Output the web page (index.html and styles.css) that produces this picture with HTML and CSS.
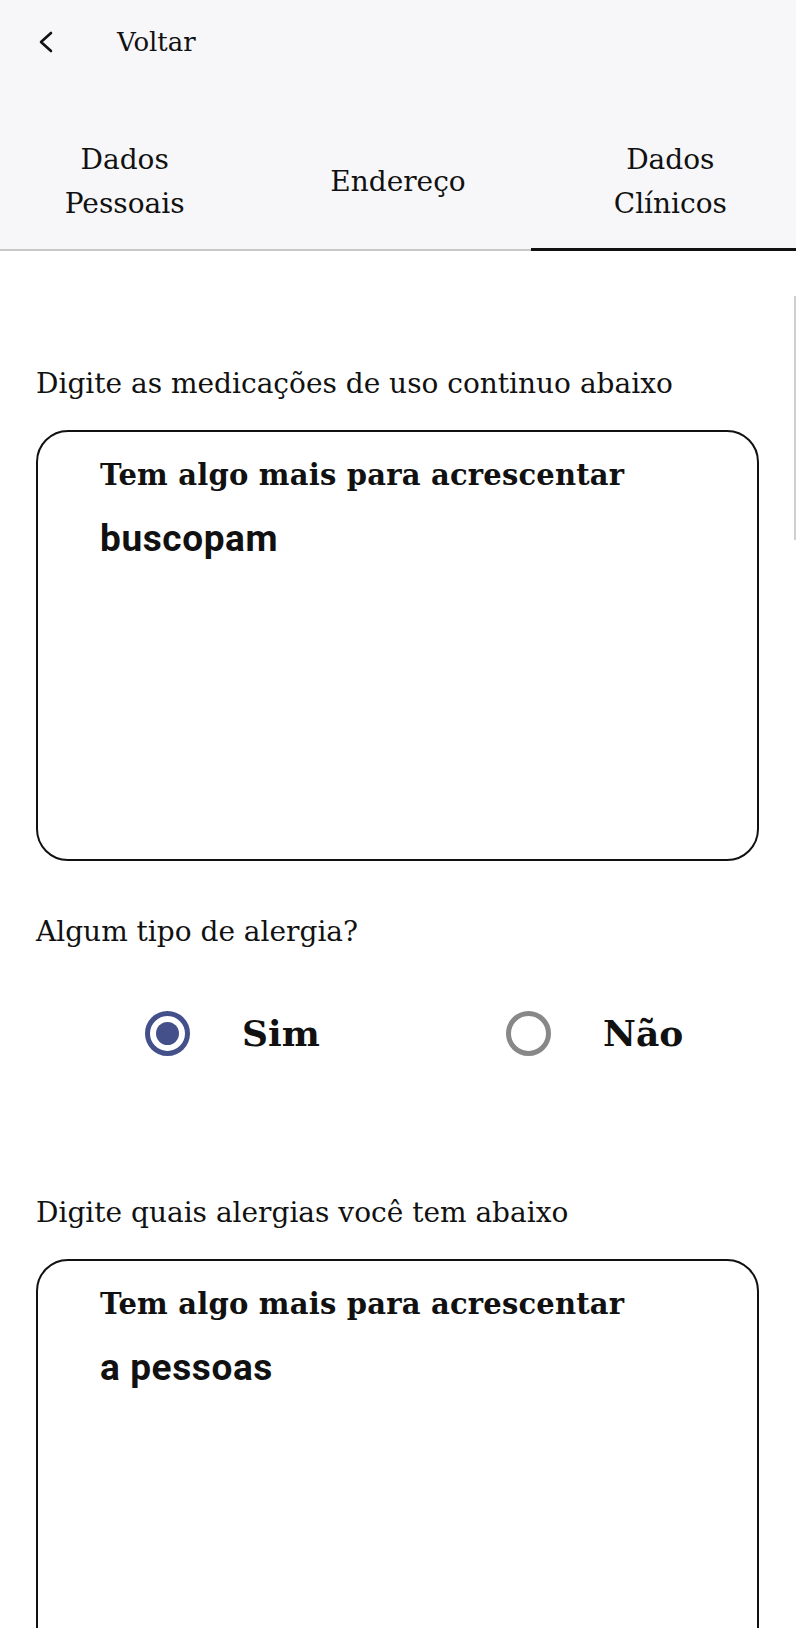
FILE: index.html
```html
<!DOCTYPE html>
<html lang="pt">
<head>
<meta charset="utf-8">
<link rel="stylesheet" href="styles.css">
</head>
<body>
<div class="screen">
  <header class="header">
    <div class="topbar">
      <svg class="back" width="20" height="24" viewBox="0 0 20 24"><path d="M15 3 L5 12 L15 21" fill="none" stroke="#111" stroke-width="2.6" stroke-linecap="round" stroke-linejoin="round"/></svg>
      <span class="back-label">Voltar</span>
    </div>
    <nav class="tabs">
      <div class="tab tab-left">Dados<br>Pessoais</div>
      <div class="tab">Endereço</div>
      <div class="tab tab-right active">Dados<br>Clínicos</div>
    </nav>
  </header>
  <main class="content">
    <p class="label label-first">Digite as medicações de uso continuo abaixo</p>
    <div class="textbox">
      <div class="hint">Tem algo mais para acrescentar</div>
      <div class="value">buscopam</div>
    </div>
    <p class="label label-q">Algum tipo de alergia?</p>
    <div class="radios">
      <div class="radio-item"><span class="radio checked"></span><span class="radio-text">Sim</span></div>
      <div class="radio-item"><span class="radio"></span><span class="radio-text">Não</span></div>
    </div>
    <p class="label label-third">Digite quais alergias você tem abaixo</p>
    <div class="textbox textbox-open">
      <div class="hint">Tem algo mais para acrescentar</div>
      <div class="value">a pessoas</div>
    </div>
  </main>
  <div class="scrollbar"></div>
</div>
</body>
</html>
```

FILE: styles.css
```css
* { box-sizing: border-box; }
html, body { margin: 0; padding: 0; background: #fff; }
body {
  font-family: "DejaVu Serif", "Liberation Serif", serif;
  color: #111;
  width: 796px;
  height: 1628px;
  overflow: hidden;
}
.screen { position: relative; width: 796px; height: 1628px; overflow: hidden; }

.header { background: #f7f7f9; }
.topbar {
  height: 84px;
  display: flex;
  align-items: center;
  padding-left: 36px;
}
.back { display: block; }
.back-label { margin-left: 61px; font-size: 26px; }

.tabs {
  display: grid;
  grid-template-columns: repeat(3, 1fr);
  margin-top: 35px;
  border-bottom: 2px solid #c8c8c8;
}
.tab {
  height: 132px;
  display: flex;
  align-items: center;
  justify-content: center;
  text-align: center;
  font-size: 28px;
  line-height: 44px;
  padding-bottom: 4px;
  margin-bottom: -2px;
  border-bottom: 2px solid transparent;
}
.tab-left { padding-right: 16px; }
.tab-right { padding-left: 14px; }
.tab.active { border-bottom: 3px solid #111; }

.content { padding: 0 37px 0 36px; }
.label { margin: 0; font-size: 28px; line-height: 36px; }
.label-first { margin-top: 115px; }
.textbox {
  margin-top: 28px;
  height: 431px;
  border: 2px solid #111;
  border-radius: 32px;
  padding: 23px 0 0 62px;
}
.textbox-open { height: 420px; }
.hint { font-weight: bold; font-size: 29px; line-height: 40px; letter-spacing: 0.2px; }
.value {
  margin-top: 24px;
  font-family: Roboto, "Liberation Sans", sans-serif;
  font-weight: bold;
  font-size: 37px;
  line-height: 40px;
  letter-spacing: 0.6px;
}
.label-q { margin-top: 53px; }
.radios {
  display: flex;
  margin-top: 58px;
  padding-left: 109px;
}
.radio-item { display: flex; align-items: center; width: 361px; flex-shrink: 0; }
.radio {
  width: 45px; height: 45px;
  border-radius: 50%;
  border: 5px solid #888;
  display: flex; align-items: center; justify-content: center;
  flex-shrink: 0;
}
.radio.checked { border-color: #43508a; }
.radio.checked::after {
  content: "";
  width: 23px; height: 23px;
  border-radius: 50%;
  background: #43508a;
}
.radio-text { margin-left: 52px; font-size: 36px; font-weight: bold; line-height: 50px; }
.label-third { margin-top: 137px; }

.scrollbar {
  position: absolute;
  right: 0;
  top: 296px;
  width: 2px;
  height: 244px;
  background: #cfcfcf;
}
```
